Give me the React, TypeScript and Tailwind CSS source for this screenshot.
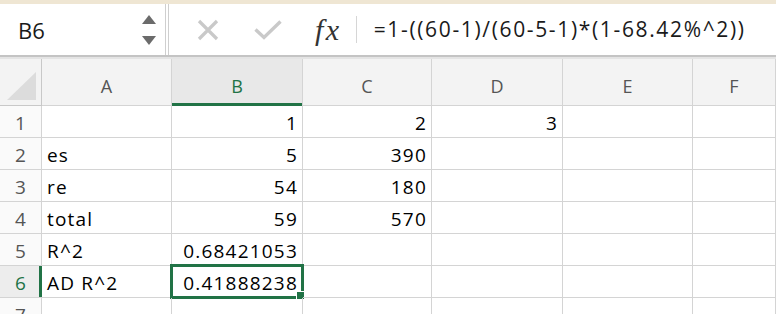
const columns = ['A', 'B', 'C', 'D', 'E', 'F']

const rows: string[][] = [
  ['', '1', '2', '3', '', ''],
  ['es', '5', '390', '', '', ''],
  ['re', '54', '180', '', '', ''],
  ['total', '59', '570', '', '', ''],
  ['R^2', '0.68421053', '', '', '', ''],
  ['AD R^2', '0.41888238', '', '', '', ''],
  ['', '', '', '', '', ''],
]

const isNumber = (v: string) => /^-?[\d.]+$/.test(v)

const font = { fontFamily: '"Open Sans", Lato, sans-serif' }

export default function App() {
  return (
    <div className="h-[314px] w-[776px] overflow-hidden bg-white text-black" style={font}>
      {/* top strip */}
      <div className="h-[4px] bg-[#efe6d3]" />

      {/* name box + formula bar */}
      <div className="flex h-[53px] border-b-2 border-[#c4c4c4]">
        <div className="flex w-[166px] items-center justify-between border-r border-[#cfcfcf] pl-[18px] pr-[9px]">
          <span className="text-[22px] leading-none text-[#1a1a1a]">B6</span>
          <div className="flex flex-col items-center gap-[12px]">
            <svg width="14" height="9" viewBox="0 0 14 9">
              <path d="M7 0 L14 9 L0 9 Z" fill="#6b6b6b" />
            </svg>
            <svg width="14" height="9" viewBox="0 0 14 9">
              <path d="M0 0 L14 0 L7 9 Z" fill="#6b6b6b" />
            </svg>
          </div>
        </div>
        <div className="ml-[2px] flex flex-1 items-center border-l border-[#cfcfcf]">
          <svg width="22" height="22" viewBox="0 0 22 22" className="ml-[28px]">
            <path d="M2 2 L20 20 M20 2 L2 20" stroke="#c9c9c9" strokeWidth="3.2" />
          </svg>
          <svg width="28" height="20" viewBox="0 0 28 20" className="ml-[35px]">
            <path d="M1.5 9.5 L10 17.5 L26.5 1.5" stroke="#c9c9c9" strokeWidth="3.4" fill="none" />
          </svg>
          <span
            className="ml-[33px] text-[30px] italic leading-none tracking-[2.5px] text-[#333]"
            style={{ fontFamily: '"Liberation Serif", "DejaVu Serif", serif' }}
          >
            fx
          </span>
          <div className="ml-[14px] h-[27px] w-px bg-[#d6d6d6]" />
          <span className="ml-[17px] text-[21px] leading-none tracking-[1.65px] text-[#1a1a1a]">
            =1-((60-1)/(60-5-1)*(1-68.42%^2))
          </span>
        </div>
      </div>
      <div className="h-[2px] bg-[#e4e4e4]" />

      {/* grid */}
      <div className="grid grid-cols-[42px_130px_131px_129px_131px_130px_1fr]">
        {/* header row */}
        <div className="relative h-[47px] border-r border-b border-[#c8c8c8] bg-[#f3f3f3]">
          <svg width="29" height="28" viewBox="0 0 29 28" className="absolute left-[7px] top-[13px]">
            <path d="M29 0 L29 28 L0 28 Z" fill="#dcdcdc" />
          </svg>
        </div>
        {columns.map((c) => (
          <div
            key={c}
            className={`relative flex h-[47px] items-center justify-center border-r border-b border-[#d4d4d4] pt-[7px] text-[18px] leading-none ${
              c === 'B' ? 'bg-[#e8e8e8] text-[#217346]' : 'bg-[#f3f3f3] text-[#555]'
            }`}
          >
            {c}
            {c === 'B' && <div className="absolute inset-x-0 -bottom-px h-[3px] bg-[#217346]" />}
          </div>
        ))}

        {/* body rows */}
        {rows.map((row, r) => (
          <div key={r} className="contents">
            <div
              className={`relative flex h-[32px] items-center justify-center border-r border-b border-[#d4d4d4] pt-[3px] text-[19px] leading-none ${
                r === 5 ? 'bg-[#ededed] text-[#217346]' : 'bg-[#fafafa] text-[#555]'
              }`}
            >
              {r + 1}
              {r === 5 && <div className="absolute -right-px top-0 bottom-0 w-[3px] bg-[#217346]" />}
            </div>
            {row.map((v, c) => (
              <div
                key={c}
                className={`relative flex h-[32px] items-center border-r border-b border-[#d4d4d4] pl-[5px] pr-[4px] pt-[3px] text-[19px] leading-none tracking-[1.2px] ${
                  isNumber(v) ? 'justify-end' : 'justify-start'
                }`}
              >
                {v}
                {r === 5 && c === 1 && (
                  <div className="pointer-events-none absolute -left-[2px] -top-[2px] -right-[2px] -bottom-[2px] border-[3px] border-[#217346]">
                    <div className="absolute -right-[4px] -bottom-[4px] h-[9px] w-[9px] border border-white bg-[#217346]" />
                  </div>
                )}
              </div>
            ))}
          </div>
        ))}
      </div>
    </div>
  )
}
